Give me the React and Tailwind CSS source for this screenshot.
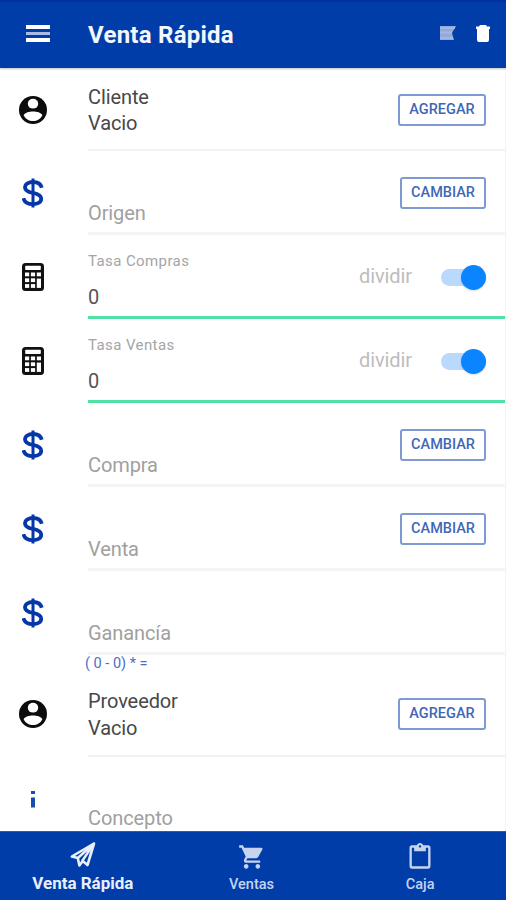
import { useState } from "react";
import { MdShoppingCart, MdContentPaste } from "react-icons/md";

function UserIcon() {
  return (
    <svg width="28" height="28" viewBox="0 0 28 28">
      <circle cx="14" cy="14" r="14" fill="#0c0c0c" />
      <ellipse cx="14" cy="7.700" rx="5.200" ry="4.900" fill="#fff" />
      <path
        d="M4.600 19.200C6 16.600 10 15.500 14 15.500s8 1.100 9.400 3.700C21.600 23 18 25 14 25S6.400 23 4.600 19.200Z"
        fill="#fff"
      />
    </svg>
  );
}

function DollarIcon() {
  return (
    <svg
      width="22"
      height="30"
      viewBox="0 0 22 30"
      fill="none"
      stroke="#0637a8"
      strokeWidth="3.800"
    >
      <path d="M11 .5v29" strokeWidth="3" />
      <path d="M19.800 9.800C18.900 6.400 15.600 4 11 4S3 6.100 3 9.400c0 3.400 3.200 4.500 8 5.500 5 1 8.200 2.300 8.200 5.900 0 3.400-3.400 5.300-8.200 5.300-5.100 0-8.600-1.900-9.600-6" />
    </svg>
  );
}

function CalcIcon() {
  return (
    <svg width="22" height="28" viewBox="0 0 22 28">
      <rect width="22" height="28" rx="3.500" fill="#111" />
      <g fill="#fff">
        <rect x="3.200" y="2.800" width="15.600" height="4.200" rx=".8" />
        <rect x="3" y="9.500" width="4.200" height="3.800" />
        <rect x="8.900" y="9.500" width="4.200" height="3.800" />
        <rect x="14.800" y="9.500" width="4.200" height="3.800" />
        <rect x="3" y="15.300" width="4.200" height="3.800" />
        <rect x="8.900" y="15.300" width="4.200" height="3.800" />
        <rect x="3" y="21.100" width="4.200" height="3.800" />
        <rect x="8.900" y="21.100" width="4.200" height="3.800" />
        <rect x="14.800" y="15.600" width="4.200" height="9.300" />
      </g>
    </svg>
  );
}

function InfoIcon() {
  return (
    <svg width="4" height="17" viewBox="0 0 4 17" fill="#1450ab">
      <rect width="4" height="3" />
      <rect y="6.500" width="4" height="10" />
    </svg>
  );
}

function PlaneIcon() {
  return (
    <svg width="26" height="26" viewBox="0 0 26 26" fill="none" stroke="currentColor">
      <path
        d="M24 1.500 1.800 14.500l6 1.500 1.600 7.500 3.300-4.600 4.800 4.100Z"
        strokeWidth="2.600"
        strokeLinejoin="round"
      />
      <path d="M24 1.500 7.800 16M24 1.500 12.200 19" strokeWidth="2.400" />
    </svg>
  );
}

function OutlineButton({ children, className }) {
  return (
    <button
      className={`h-8 shrink-0 rounded-[3px] border-2 border-[#7f99d2] text-[14.5px] font-medium text-[#3f67b8] ${className}`}
    >
      {children}
    </button>
  );
}

function Row({ icon, children, border = "border-b-2 border-[#f2f2f2]", height = "h-[84px]" }) {
  return (
    <div className={`flex shrink-0 ${height}`}>
      <div className="flex h-[84px] w-[66px] shrink-0 items-center justify-center">{icon}</div>
      <div className={`ml-[22px] flex flex-1 justify-between pr-[19px] ${border}`}>
        {children}
      </div>
    </div>
  );
}

function PersonRow({ title, height, textClass }) {
  return (
    <Row icon={<UserIcon />} height={height}>
      <div className={`text-xl tracking-[-0.1px] text-[#484848] ${textClass}`}>
        <p>{title}</p>
        <p>Vacio</p>
      </div>
      <OutlineButton className="mt-[26px] w-[88px]">AGREGAR</OutlineButton>
    </Row>
  );
}

function MoneyRow({ label, button }) {
  return (
    <Row icon={<DollarIcon />} border="border-b-3 border-[#f5f5f5]">
      <p className="mt-12 text-xl leading-7 tracking-[-0.1px] text-[#a0a0a0]">{label}</p>
      {button && (
        <OutlineButton className="mt-[26px] w-[86px]">CAMBIAR</OutlineButton>
      )}
    </Row>
  );
}

function RateRow({ label }) {
  const [on, setOn] = useState(true);

  return (
    <Row icon={<CalcIcon />} border="border-b-3 border-[#4fe0a5]">
      <div>
        <p className="mt-4 text-[15px] leading-5 tracking-[0.4px] text-[#a5a5a5]">{label}</p>
        <p className="mt-3 text-xl leading-7 text-[#555]">0</p>
      </div>
      <div className="flex h-[84px] items-center">
        <span className="mr-[29px] pb-0.5 text-xl tracking-[-0.1px] text-[#bdbdbd]">dividir</span>
        <button
          onClick={() => setOn(!on)}
          className={`flex h-[17px] w-[45px] items-center rounded-full ${
            on ? "justify-end bg-[#b9d9ff]" : "justify-start bg-gray-300"
          }`}
        >
          <span className="h-[25px] w-[25px] rounded-full bg-[#0a84ff] shadow-sm" />
        </button>
      </div>
    </Row>
  );
}

const tabs = [
  { label: "Venta Rápida", icon: <PlaneIcon />, active: true },
  { label: "Ventas", icon: <MdShoppingCart size={28} /> },
  { label: "Caja", icon: <MdContentPaste size={28} /> },
];

function App() {
  return (
    <div className="flex h-[900px] w-[506px] flex-col overflow-hidden bg-white font-['Roboto',sans-serif]">
      <header className="z-10 flex h-[68px] shrink-0 items-center border-t-2 border-[#00309f] bg-[#003da8] pr-4 pb-1 pl-[26px] shadow-[0_1px_2px_rgba(0,0,0,0.25)]">
        <div className="flex w-6 flex-col gap-[3px]">
          <span className="h-1 bg-white" />
          <span className="h-[3px] bg-[#a9bbe2]" />
          <span className="h-1 bg-white" />
        </div>
        <h1 className="mt-1 ml-[38px] flex-1 text-2xl font-bold tracking-[0.25px] text-[#f4f7ff]">
          Venta Rápida
        </h1>
        <svg width="16" height="14" viewBox="0 0 16 14" className="mr-5">
          <path d="M0 0h16l-4 7 2 7H0Z" fill="#93a9db" />
          <path d="M0 2h15M0 6.500h12M0 12h13" stroke="#a3b7e2" strokeWidth="2" />
        </svg>
        <svg width="14" height="17" viewBox="0 0 14 17" fill="#fff">
          <path d="M4 0h6l1 1.500h3V4h-1v11a2 2 0 0 1-2 2H3a2 2 0 0 1-2-2V4H0V1.500h3Z" />
        </svg>
      </header>

      <main className="flex min-h-0 flex-1 flex-col overflow-hidden border-r border-[#f5f5f5]">
        <PersonRow title="Cliente" height="h-[83px]" textClass="mt-4 leading-[26px]" />
        <MoneyRow label="Origen" button />
        <RateRow label="Tasa Compras" />
        <RateRow label="Tasa Ventas" />
        <MoneyRow label="Compra" button />
        <MoneyRow label="Venta" button />
        <MoneyRow label="Ganancía" />
        <p className="ml-[85px] h-[17px] shrink-0 text-[14.5px] leading-[17px] text-[#4b6fc6]">
          ( 0 - 0) * =
        </p>
        <PersonRow title="Proveedor" height="h-[85px]" textClass="mt-4 leading-[27px]" />
        <Row icon={<InfoIcon />}>
          <p className="mt-[47px] text-xl leading-7 tracking-[-0.1px] text-[#a0a0a0]">Concepto</p>
        </Row>
      </main>

      <nav className="flex h-[69px] shrink-0 border-t border-[#2a5bb5] bg-[#003da8]">
        {tabs.map((tab) => (
          <div
            key={tab.label}
            className={`flex flex-1 flex-col items-center pr-[3px] ${
              tab.active ? "pt-[9px] text-[#e9effb]" : "pt-[11px] text-[#c6d4f0]"
            }`}
          >
            <div className="flex h-7 items-center">{tab.icon}</div>
            <span
              className={
                tab.active
                  ? "text-[17px] leading-7 font-bold"
                  : "text-[14.5px] leading-7 font-medium"
              }
            >
              {tab.label}
            </span>
          </div>
        ))}
      </nav>
    </div>
  );
}

export default App;
